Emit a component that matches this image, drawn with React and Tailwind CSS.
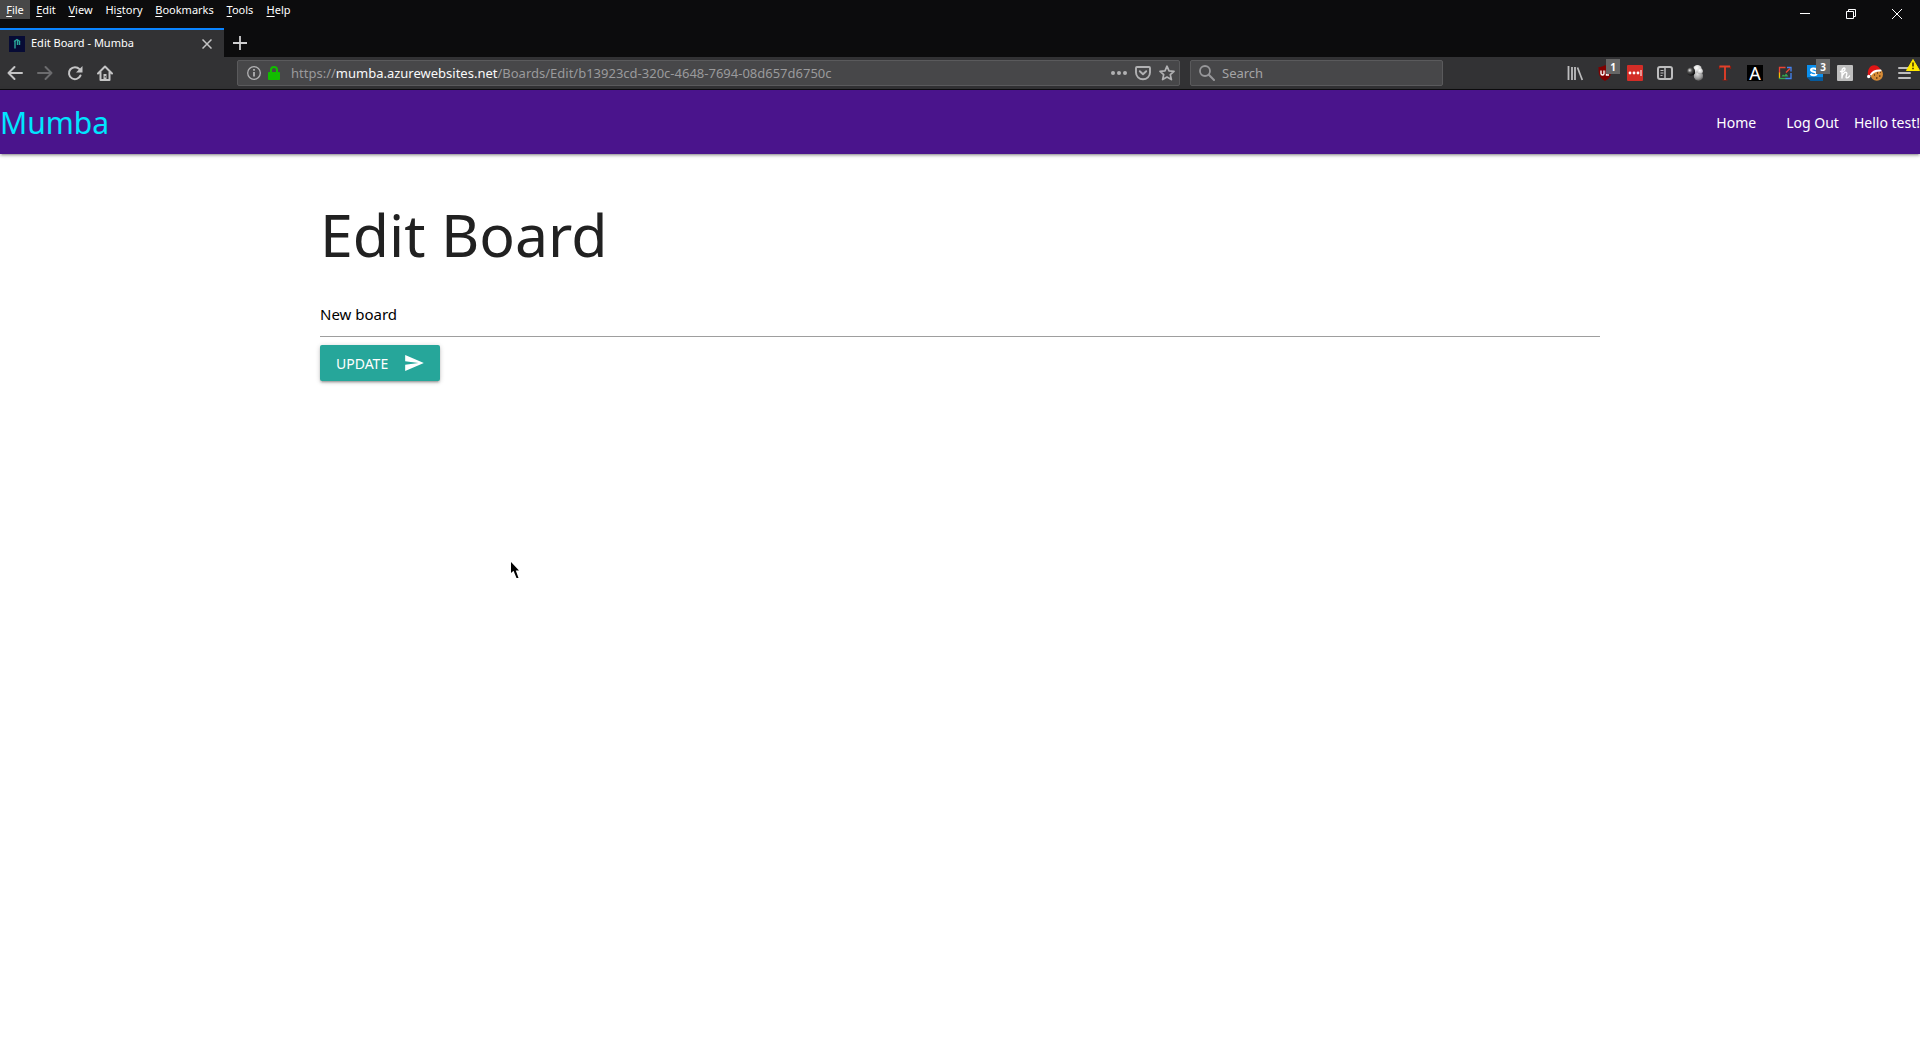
const menus = [
  { key: 'F', before: '', after: 'ile', cls: 'w-[30px] bg-[#484848]' },
  { key: 'E', before: '', after: 'dit', cls: 'w-8' },
  { key: 'V', before: '', after: 'iew', cls: 'w-[37px]' },
  { key: 's', before: 'Hi', after: 'tory', cls: 'w-[50px]' },
  { key: 'B', before: '', after: 'ookmarks', cls: 'w-[71px]' },
  { key: 'T', before: '', after: 'ools', cls: 'w-10' },
  { key: 'H', before: '', after: 'elp', cls: 'w-[37px]' },
];

function Icon({ children, className = 'size-4', viewBox = '0 0 16 16' }) {
  return (
    <svg viewBox={viewBox} className={`shrink-0 ${className}`} fill="none" aria-hidden="true">
      {children}
    </svg>
  );
}

function ToolButton({ label, badge, children }) {
  return (
    <button type="button" aria-label={label} className="relative flex h-8 w-[30px] shrink-0 items-center justify-center">
      {children}
      {badge && (
        <span className="absolute top-0.5 right-0 flex h-[15px] w-3.5 items-center justify-center bg-[#666] text-[10px] leading-none font-bold text-white">
          {badge}
        </span>
      )}
    </button>
  );
}

function TitleBar() {
  return (
    <div className="flex h-7 items-start justify-between bg-[#0c0c0d] text-white">
      <div role="menubar" className="flex">
        {menus.map((m) => (
          <button
            key={m.before + m.key + m.after}
            type="button"
            role="menuitem"
            className={`flex h-[19px] justify-center text-[11px] leading-5 whitespace-nowrap ${m.cls}`}
          >
            <span>
              {m.before}
              <span className="underline underline-offset-2">{m.key}</span>
              {m.after}
            </span>
          </button>
        ))}
      </div>
      <div className="flex">
        <button type="button" aria-label="Minimize" className="flex h-7 w-[46px] items-center justify-center">
          <Icon className="size-2.5" viewBox="0 0 10 10">
            <path d="M0 4.5h10" stroke="#fff" />
          </Icon>
        </button>
        <button type="button" aria-label="Restore" className="flex h-7 w-[46px] items-center justify-center">
          <Icon className="size-2.5" viewBox="0 0 10 10">
            <path d="M.5 2.5h7v7h-7zM2.5 2.5v-2h7v7h-2" stroke="#fff" />
          </Icon>
        </button>
        <button type="button" aria-label="Close" className="flex h-7 w-[46px] items-center justify-center">
          <Icon className="size-2.5" viewBox="0 0 10 10">
            <path d="M0 0l10 10M10 0L0 10" stroke="#fff" />
          </Icon>
        </button>
      </div>
    </div>
  );
}

function TabStrip() {
  return (
    <div className="flex h-[29px] bg-[#0c0c0d]">
      <div className="flex w-56 items-center border-t-2 border-[#0a84ff] bg-[#323234] pr-[9px] pl-[9px] text-white">
        <Icon>
          <path d="M0 0h16v16H0z" fill="#070b35" />
          <path d="M6 12.500V5M8.500 9V4M10.500 9V5" stroke="#2aa79b" strokeWidth="1.400" />
          <path d="M5 5.500L8 3.500l3 2" stroke="#2aa79b" strokeWidth="1.400" />
        </Icon>
        <span className="ml-1.5 flex-1 text-[11px] whitespace-nowrap">Edit Board - Mumba</span>
        <button type="button" aria-label="Close tab" className="flex size-4 items-center justify-center">
          <Icon className="size-2.5" viewBox="0 0 10 10">
            <path d="M.5.5l9 9M9.500.5l-9 9" stroke="#c4c4c5" strokeWidth="1.500" />
          </Icon>
        </button>
      </div>
      <button type="button" aria-label="New tab" className="flex w-8 items-center justify-center">
        <Icon className="size-3.5" viewBox="0 0 14 14">
          <path d="M7 0v14M0 7h14" stroke="#cfcfd0" strokeWidth="1.800" />
        </Icon>
      </button>
    </div>
  );
}

function Extensions() {
  return (
    <div className="flex">
      <ToolButton label="Library">
        <Icon>
          <path d="M1.500 1v14M5 2v13M8 2v13" stroke="#bdbdbe" strokeWidth="1.800" />
          <path d="M10.500 2.500L15.300 15" stroke="#bdbdbe" strokeWidth="1.700" />
        </Icon>
      </ToolButton>
      <ToolButton label="uBlock Origin" badge="1">
        <Icon>
          <path d="M8 0c2 1.500 4 2 6.500 2 0 7-.5 11-6.500 14C2 13 1.500 9 1.500 2 4 2 6 1.500 8 0z" fill="#800000" />
          <path d="M4 5.500v3q0 1.500 1.500 1.500T7 8.500v-3M9.500 5.500v4.500h2.500" stroke="#fff" strokeWidth="1.400" />
        </Icon>
      </ToolButton>
      <ToolButton label="LastPass">
        <Icon>
          <rect width="16" height="16" rx="1" fill="#d32d27" />
          <circle cx="3" cy="8" r="1.400" fill="#fff" />
          <circle cx="7" cy="8" r="1.400" fill="#fff" />
          <circle cx="11" cy="8" r="1.400" fill="#fff" />
          <path d="M14 5v6" stroke="#fff" />
        </Icon>
      </ToolButton>
      <ToolButton label="Sidebars">
        <Icon>
          <rect x="1" y="2" width="14" height="12" rx="2" stroke="#bdbdbe" strokeWidth="2" />
          <path d="M8 2v12" stroke="#bdbdbe" strokeWidth="1.500" />
          <path d="M3.500 5.500h3M3.500 8h3M3.500 10.500h2" stroke="#bdbdbe" />
        </Icon>
      </ToolButton>
      <ToolButton label="Molecules">
        <Icon>
          <defs>
            <radialGradient id="ball" cx=".4" cy=".35" r=".8">
              <stop offset="0" stopColor="#fff" />
              <stop offset=".6" stopColor="#d0d0d0" />
              <stop offset="1" stopColor="#777" />
            </radialGradient>
            <radialGradient id="greyBall" cx=".4" cy=".3" r=".8">
              <stop offset="0" stopColor="#e0e0e0" />
              <stop offset=".6" stopColor="#999" />
              <stop offset="1" stopColor="#444" />
            </radialGradient>
            <radialGradient id="darkBall" cx=".35" cy=".35" r=".7">
              <stop offset="0" stopColor="#eee" />
              <stop offset=".4" stopColor="#555" />
              <stop offset="1" stopColor="#080808" />
            </radialGradient>
          </defs>
          <circle cx="10.500" cy="4.300" r="4.300" fill="url(#ball)" />
          <circle cx="11.500" cy="11" r="4.700" fill="url(#greyBall)" />
          <circle cx="13.200" cy="6.200" r="2.700" fill="url(#ball)" />
          <circle cx="4" cy="6.500" r="4" fill="url(#darkBall)" />
        </Icon>
      </ToolButton>
      <ToolButton label="Text tool">
        <Icon>
          <path d="M2.500 1.500h11M8 1.500V15M5.500 15h5M2.500 1v3M13.500 1v3" stroke="#8e1c10" strokeWidth="1.200" />
          <path d="M2.500 1.500h10.500M8 1.500V15" stroke="#e2402a" strokeWidth="1.800" />
        </Icon>
      </ToolButton>
      <ToolButton label="Font tool">
        <span className="flex size-4 items-center justify-center bg-black text-[18px] leading-none text-white">A</span>
      </ToolButton>
      <ToolButton label="Image search">
        <Icon>
          <path d="M8.500 2.500h-6V8" stroke="#ea4335" strokeWidth="1.300" />
          <path d="M2.500 7.500v6" stroke="#fbbc05" strokeWidth="1.300" />
          <path d="M2 13.500h7" stroke="#34a853" strokeWidth="1.300" />
          <path d="M8.500 13.500h5.500V8" stroke="#4285f4" strokeWidth="1.300" />
          <path d="M10 2.500h4v4" stroke="#4285f4" strokeWidth="1.300" />
          <path d="M9 7.500l4-4" stroke="#ea4335" strokeWidth="1.500" />
          <path d="M4.500 11.500l1.500-2 1.500 1 1.500-2 2.500 3z" fill="#34a853" />
        </Icon>
      </ToolButton>
      <ToolButton label="Stylish" badge="3">
        <Icon>
          <path d="M0 0h16v12.500H0z" fill="#0a8fee" />
          <path d="M0 12.500h16V16H3.500z" fill="#075a9c" />
          <path d="M9.500 4.500C8 3 4 3 4 5s5.500 1.500 5.500 3.700S5 10.500 3.500 9" stroke="#fff" strokeWidth="2" />
        </Icon>
      </ToolButton>
      <ToolButton label="Honey">
        <Icon>
          <rect width="16" height="16" rx="1" fill="#bfbfbf" />
          <path
            d="M5 13V5.500C5 3.500 8 2 8 4S5.500 7 3.500 6.500M5 12c.5-3 3-5.500 4.500-4.500S8 12.500 9.500 12.800 12 12 12.500 11"
            stroke="#fff"
            strokeWidth="1.400"
            strokeLinecap="round"
          />
        </Icon>
      </ToolButton>
      <ToolButton label="Cookies">
        <Icon>
          <circle cx="9.800" cy="9.500" r="6.200" fill="#d58a35" />
          <path d="M7 10h1M10 8h1M12 11h1.500M9 13h1.500M13 7h1" stroke="#5f3512" strokeWidth="1.300" />
          <path d="M1 11C0 5 3 0 7.500.3 11 .5 13 3 13.500 5 9 4.500 6 6 4 9.500z" fill="#e01515" />
          <path d="M4 9.500Q7 5 13.500 5.500" stroke="#fff" strokeWidth="2" strokeLinecap="round" />
          <circle cx="1.700" cy="11.500" r="1.700" fill="#fff" />
        </Icon>
      </ToolButton>
      <button type="button" aria-label="Open menu" className="relative flex h-8 w-[30px] items-center justify-center">
        <Icon>
          <path d="M2 3h11M2 8h11M2 13h11" stroke="#bdbdbe" strokeWidth="2" strokeLinecap="round" />
        </Icon>
        <span className="absolute top-0.5 right-0">
          <Icon className="h-3 w-3.5" viewBox="0 0 14 12">
            <path d="M7 .5L13.500 11.500H.5z" fill="#ffe900" stroke="#ffe900" strokeLinejoin="round" />
            <path d="M7 3.500v4M7 8.800v1.500" stroke="#3e2800" strokeWidth="1.500" />
          </Icon>
        </span>
      </button>
    </div>
  );
}

function Toolbar() {
  return (
    <div className="flex h-[33px] items-start border-b border-[#0c0c0d] bg-[#323234]">
      <ToolButton label="Back">
        <Icon>
          <path d="M7.500 2L1.500 8l6 6M1.500 8H15" stroke="#c4c4c5" strokeWidth="2" strokeLinecap="round" strokeLinejoin="round" />
        </Icon>
      </ToolButton>
      <ToolButton label="Forward">
        <Icon>
          <path d="M8.500 2l6 6-6 6M14.500 8H1" stroke="#6c6c6e" strokeWidth="2" strokeLinecap="round" strokeLinejoin="round" />
        </Icon>
      </ToolButton>
      <ToolButton label="Reload">
        <Icon>
          <path d="M12.500 4.200A6 6 0 1 0 13.500 10.500" stroke="#c4c4c5" strokeWidth="2" strokeLinecap="round" />
          <path d="M15.500 1v6.500H9z" fill="#c4c4c5" />
        </Icon>
      </ToolButton>
      <ToolButton label="Home">
        <Icon>
          <path d="M1 8.500l7-7 7 7M3.500 7.500V15h9V7.500" stroke="#c4c4c5" strokeWidth="2" strokeLinecap="round" strokeLinejoin="round" />
          <path d="M6.500 9h3v6h-3z" fill="#c4c4c5" />
          <path d="M8.200 11v1.500" stroke="#323234" />
        </Icon>
      </ToolButton>
      <div className="w-[117px] shrink" />
      <div className="mt-[3px] flex h-[26px] flex-1 items-center rounded-xs border border-[#5a5a5c] bg-[#474749] pr-1 pl-2">
        <button type="button" aria-label="Site information" className="flex">
          <Icon>
            <circle cx="8" cy="8" r="6.300" stroke="#b1b1b3" strokeWidth="1.300" />
            <path d="M8 7v4.500M8 4v1.700" stroke="#b1b1b3" strokeWidth="1.800" />
          </Icon>
        </button>
        <Icon className="ml-1 size-4">
          <path d="M5 8V5a3 3 0 0 1 6 0v3" stroke="#12bc00" strokeWidth="2" />
          <rect x="2" y="7" width="12" height="8" rx="1" fill="#12bc00" />
        </Icon>
        <div className="ml-[9px] flex-1 pt-0.5 text-[13px] whitespace-nowrap text-[#9a9a9c]">
          https://<span className="text-[#f9f9fa]">mumba.azurewebsites.net</span>
          /Boards/Edit/b13923cd-320c-4648-7694-08d657d6750c
        </div>
        <div className="flex gap-2">
          <button type="button" aria-label="Page actions">
            <Icon>
              <circle cx="2" cy="8" r="2" fill="#b1b1b3" />
              <circle cx="8" cy="8" r="2" fill="#b1b1b3" />
              <circle cx="14" cy="8" r="2" fill="#b1b1b3" />
            </Icon>
          </button>
          <button type="button" aria-label="Save to Pocket">
            <Icon>
              <path d="M2 2h12q1 0 1 1v4.500a7 6.800 0 0 1-14 0V3q0-1 1-1z" stroke="#b1b1b3" strokeWidth="1.900" />
              <path d="M4.800 6.200L8 9.300l3.200-3.100" stroke="#b1b1b3" strokeWidth="1.900" strokeLinecap="round" strokeLinejoin="round" />
            </Icon>
          </button>
          <button type="button" aria-label="Bookmark this page">
            <Icon>
              <path
                d="M8 1.200l2 4.600 5 .5-3.700 3.300 1.100 5L8 12l-4.400 2.600 1.100-5L1 6.300l5-.5z"
                stroke="#b1b1b3"
                strokeWidth="1.700"
                strokeLinejoin="round"
              />
            </Icon>
          </button>
        </div>
      </div>
      <label className="mt-[3px] ml-2.5 flex h-[26px] w-[253px] items-center gap-[7px] rounded-xs border border-[#5a5a5c] bg-[#474749] px-2">
        <Icon>
          <circle cx="6" cy="6" r="5" stroke="#97979a" strokeWidth="1.800" />
          <path d="M9.800 9.800l5.200 5.200" stroke="#97979a" strokeWidth="2" strokeLinecap="round" />
        </Icon>
        <input
          type="text"
          aria-label="Search"
          placeholder="Search"
          className="w-full min-w-0 bg-transparent pt-0.5 text-[13px] text-white outline-none placeholder:text-[#a4a4a6]"
        />
      </label>
      <div className="w-[117px] shrink" />
      <Extensions />
    </div>
  );
}

function SiteNav() {
  return (
    <nav className="flex h-16 items-center justify-between bg-[#4a148c] pt-0.5 text-white shadow-[0_2px_2px_0_rgba(0,0,0,0.14),0_3px_1px_-2px_rgba(0,0,0,0.12),0_1px_5px_0_rgba(0,0,0,0.2)]">
      <a href="#mumba" className="text-[30px] leading-none text-[#00e5ff]">
        Mumba
      </a>
      <div className="flex text-[14px] leading-none whitespace-nowrap">
        <a href="#home" className="px-[15px]">
          Home
        </a>
        <a href="#logout" className="px-[15px]">
          Log Out
        </a>
        <span>Hello test!</span>
      </div>
    </nav>
  );
}

function EditBoard() {
  return (
    <main className="mx-auto w-full max-w-7xl">
      <h1 className="pt-[45px] text-[59px] leading-[70px] text-[#212121]">Edit Board</h1>
      <form className="mt-[23px]" onSubmit={(e) => e.preventDefault()}>
        <input
          type="text"
          aria-label="Board name"
          defaultValue="New board"
          className="block h-[45px] w-full border-b border-[#9e9e9e] bg-transparent text-[15px] text-black outline-none"
        />
        <button
          type="submit"
          className="mt-2 flex h-9 w-[120px] items-center justify-between rounded-xs bg-[#26a69a] px-4 text-[14px] text-white shadow-[0_2px_2px_0_rgba(0,0,0,0.14),0_3px_1px_-2px_rgba(0,0,0,0.12),0_1px_5px_0_rgba(0,0,0,0.2)]"
        >
          UPDATE
          <Icon className="h-4 w-[19px]" viewBox="2 3 21 18">
            <path d="M2.010 21L23 12 2.010 3 2 10l15 2-15 2z" fill="#fff" />
          </Icon>
        </button>
      </form>
    </main>
  );
}

export default function App() {
  return (
    <div className="relative min-h-screen bg-white font-['Noto_Sans',sans-serif]">
      <header>
        <TitleBar />
        <TabStrip />
        <Toolbar />
      </header>
      <SiteNav />
      <EditBoard />
      <div className="pointer-events-none absolute top-[561px] left-[510px]">
        <Icon className="h-[19px] w-3" viewBox="0 0 12 19">
          <path d="M1 1v11l2.500-2.300L6.500 17h2L5.800 9.500H9z" fill="#000" />
        </Icon>
      </div>
    </div>
  );
}
